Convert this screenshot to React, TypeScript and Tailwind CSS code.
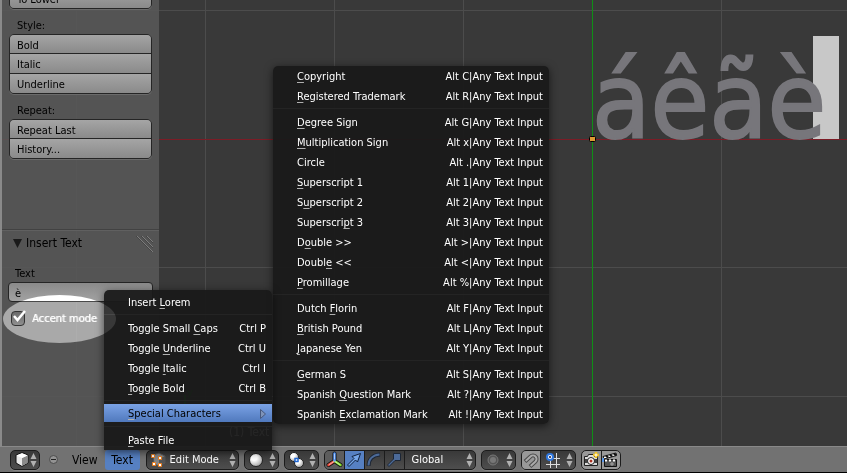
import React from "react";

type Item = { label: string; key?: number; shortcut: string };

const specialGroups: Item[][] = [
  [
    { label: "Copyright", key: 0, shortcut: "Alt C|Any Text Input" },
    { label: "Registered Trademark", key: 0, shortcut: "Alt R|Any Text Input" },
  ],
  [
    { label: "Degree Sign", key: 0, shortcut: "Alt G|Any Text Input" },
    { label: "Multiplication Sign", key: 0, shortcut: "Alt x|Any Text Input" },
    { label: "Circle", shortcut: "Alt .|Any Text Input" },
    { label: "Superscript 1", key: 0, shortcut: "Alt 1|Any Text Input" },
    { label: "Superscript 2", key: 1, shortcut: "Alt 2|Any Text Input" },
    { label: "Superscript 3", key: 9, shortcut: "Alt 3|Any Text Input" },
    { label: "Double >>", key: 1, shortcut: "Alt >|Any Text Input" },
    { label: "Double <<", key: 5, shortcut: "Alt <|Any Text Input" },
    { label: "Promillage", key: 0, shortcut: "Alt %|Any Text Input" },
  ],
  [
    { label: "Dutch Florin", key: 6, shortcut: "Alt F|Any Text Input" },
    { label: "British Pound", key: 0, shortcut: "Alt L|Any Text Input" },
    { label: "Japanese Yen", key: 0, shortcut: "Alt Y|Any Text Input" },
  ],
  [
    { label: "German S", key: 0, shortcut: "Alt S|Any Text Input" },
    { label: "Spanish Question Mark", key: 8, shortcut: "Alt ?|Any Text Input" },
    { label: "Spanish Exclamation Mark", key: 8, shortcut: "Alt !|Any Text Input" },
  ],
];

const textGroups: Item[][] = [
  [{ label: "Insert Lorem", key: 7, shortcut: "" }],
  [
    { label: "Toggle Small Caps", key: 13, shortcut: "Ctrl P" },
    { label: "Toggle Underline", key: 7, shortcut: "Ctrl U" },
    { label: "Toggle Italic", key: 7, shortcut: "Ctrl I" },
    { label: "Toggle Bold", key: 0, shortcut: "Ctrl B" },
  ],
  [{ label: "Special Characters", key: 0, shortcut: ">" }],
  [{ label: "Paste File", key: 0, shortcut: "" }],
];

function Accel({ label, at }: { label: string; at?: number }) {
  if (at === undefined) return <span>{label}</span>;
  return (
    <span>
      {label.slice(0, at)}
      <span className="underline decoration-[#b0b0b0] decoration-1 underline-offset-2 [text-decoration-skip-ink:none]">
        {label[at]}
      </span>
      {label.slice(at + 1)}
    </span>
  );
}

function Menu({ groups, className }: { groups: Item[][]; className: string }) {
  return (
    <div
      role="menu"
      className={`absolute bg-[#191919]/95 text-white shadow-[0_2px_8px_rgba(0,0,0,0.6)] ${className}`}
    >
      {groups.map((group, i) => (
        <div key={i} className={`flex flex-col ${i > 0 ? "mt-[2px] border-t border-[#242424] pt-[3px]" : ""}`}>
          {group.map((item) => {
            const open = item.shortcut === ">";
            return (
              <button
                key={item.label}
                role="menuitem"
                className={`flex w-full items-center justify-between whitespace-nowrap pl-6 pr-[6px] pt-[2px] ${
                  open ? "mb-[2px] h-[18px] bg-linear-to-b from-[#7ba3e6] to-[#5079bd] text-black" : "h-5"
                }`}
              >
                <Accel label={item.label} at={item.key} />
                {open ? (
                  <svg width="6" height="10" viewBox="0 0 6 10">
                    <path d="M.5.5 5.5 5 .5 9.5Z" fill="#7e93b8" stroke="#46587c" />
                  </svg>
                ) : (
                  <span>{item.shortcut}</span>
                )}
              </button>
            );
          })}
        </div>
      ))}
    </div>
  );
}

const gridColumns = [76, 205, 334, 463, 721, 850, 979, 1108, 1237, 1366, 1495, 1624, 1753, 1882];
const gridRows = [10, 267, 396, 525, 653, 782, 911, 1039];

function Viewport() {
  return (
    <svg className="absolute inset-0 h-full w-full" aria-label="3D view">
      {gridColumns.map((x) => (
        <rect key={x} x={x} width="1" height="100%" fill="#4c4c4c" />
      ))}
      {gridRows.map((y) => (
        <rect key={y} y={y} width="100%" height="1" fill="#4c4c4c" />
      ))}
      <rect y="139" width="100%" height="1" fill="#7c1c26" />
      <rect x="592" width="1" height="100%" fill="#0f8f16" />
      <path d="M185 395v12" stroke="#00c000" strokeWidth="2" />
      <text x="187" y="396" fill="#00a000" className="text-[11px]">y</text>
      <text x="229" y="436" fill="#ffffff" className="text-[12px]">(1) Text</text>
      <rect x="813" y="36" width="26" height="103" fill="#c8c8c8" />
      <text x="592" y="138" fill="#77767b" stroke="#77767b" strokeWidth="2" className="text-[106px]">
        áêãè
      </text>
      <rect x="589.500" y="136.500" width="6" height="5" rx="1" fill="#dd9a35" stroke="#000" />
    </svg>
  );
}

function ToolGroup({ items }: { items: string[] }) {
  return (
    <div className="flex flex-col overflow-hidden rounded-[5px] border border-[#252525] shadow-[0_1px_0_#6b6b6b]">
      {items.map((t) => (
        <button
          key={t}
          className="h-5 border-b border-[#252525] bg-linear-to-b from-[#a5a5a5] to-[#8a8a8a] pl-[7px] pt-[3px] text-left first:h-[19px] last:h-[19px] last:border-b-0"
        >
          {t}
        </button>
      ))}
    </div>
  );
}

function ToolShelf() {
  return (
    <aside className="relative flex w-[159px] flex-col border-l-2 border-[#8a8a8a] bg-[#585858]/90">
      <div className="-mt-3 flex flex-col px-[7px]">
        <ToolGroup items={["To Lower"]} />
        <h3 className="mt-[9px] h-4 pl-2 leading-4">Style:</h3>
        <ToolGroup items={["Bold", "Italic", "Underline"]} />
        <h3 className="mt-[9px] h-4 pl-2 leading-4">Repeat:</h3>
        <ToolGroup items={["Repeat Last", "History..."]} />
      </div>
      <section className="mt-[70px] flex flex-col border-t border-[#424242] px-[6px] shadow-[inset_0_1px_0_#606060]">
        <div className="flex h-[26px] items-center pl-[5px]">
          <svg width="9" height="9" viewBox="0 0 9 9">
            <path d="M0 0h9L4.500 9Z" fill="#1a1a1a" />
          </svg>
          <h2 className="pl-1 text-[12px]">Insert Text</h2>
          <svg className="ml-auto" width="17" height="17" viewBox="0 0 17 17" fill="none">
            <path d="M0 1l16 16M5 1l12 12M10 1l7 7" stroke="#444" />
            <path d="M1 1l16 16M6 1l11 11M11 1l6 6" stroke="#7c7c7c" />
          </svg>
        </div>
        <label htmlFor="body" className="mt-[10px] h-4 pl-[7px] leading-4">
          Text
        </label>
        <input
          id="body"
          defaultValue="è"
          className="h-5 rounded-[4px] border border-[#252525] bg-linear-to-b from-[#8a8a8a] to-[#a2a2a2] pl-[6px] pt-[2px] outline-none"
        />
      </section>
    </aside>
  );
}

function Arrows() {
  return (
    <svg className="ml-auto shrink-0" width="7" height="14" viewBox="0 0 7 14" fill="#b0b0b0">
      <path d="M3.500 0 6.500 6h-6ZM.5 8h6l-3 6Z" />
    </svg>
  );
}

const dark =
  "flex h-5 items-center rounded-[5px] border border-[#1c1c1c] bg-linear-to-b from-[#393939] to-[#4e4e4e] shadow-[0_1px_0_#858585]";

function Header() {
  return (
    <footer className="flex h-[27px] shrink-0 items-center border-b border-t border-b-black border-t-[#898989] bg-[#727272] pl-[10px]">
      <button aria-label="Editor type" className={`${dark} w-[30px] pl-1 pr-[2px]`}>
        <svg width="14" height="15" viewBox="0 0 14 15">
          <path d="M7 .5 13 3v8l-6 3.500L1 11V3Z" fill="#e8e8e8" stroke="#111" />
          <path d="M7 6v8l5.500-3V3.500Z" fill="#8a8a8a" />
          <path d="M1.500 3.500 7 1.500l5.500 2L7 6Z" fill="#fff" />
        </svg>
        <Arrows />
      </button>
      <button aria-label="Collapse menus" className="ml-[9px]">
        <svg width="9" height="9" viewBox="0 0 9 9" className="block">
          <circle cx="4.500" cy="4.500" r="4" fill="#939393" stroke="#4b4b4b" />
          <path d="M2 4.500h5" stroke="#222" />
        </svg>
      </button>
      <button className="ml-[14px] pt-px text-[12px]">View</button>
      <button className="ml-[7px] h-5 w-[35px] rounded-[3px] bg-[#5680c2] pt-px text-[12px]">Text</button>
      <button className={`${dark} ml-[6px] w-[93px] pl-1 pr-[2px] text-white`}>
        <svg width="15" height="15" viewBox="0 0 15 15">
          <path d="M2 3 8 1l6 3v7l-6 3-5-2Z" fill="#858585" stroke="#555" />
          <path d="M8 7v7l6-3V4Z" fill="#555" />
          <g fill="#fff" stroke="#e87d1e">
            <path d="M.5 2.500h3v3h-3zM7.500 4.500h3v3h-3zM1.500 10.500h3v3h-3zM7.500 11.500h3v3h-3z" />
          </g>
        </svg>
        <span className="pl-1 pt-[2px]">Edit Mode</span>
        <Arrows />
      </button>
      <button aria-label="Viewport shading" className={`${dark} ml-[5px] w-[35px] pl-1 pr-[2px]`}>
        <svg width="14" height="14" viewBox="0 0 14 14">
          <defs>
            <radialGradient id="ball" cx=".35" cy=".3" r=".8">
              <stop offset=".3" stopColor="#fff" />
              <stop offset="1" stopColor="#999" />
            </radialGradient>
          </defs>
          <circle cx="7" cy="7" r="6.500" fill="url(#ball)" stroke="#222" />
        </svg>
        <Arrows />
      </button>
      <button aria-label="Pivot point" className={`${dark} ml-[5px] w-[35px] pl-1 pr-[2px]`}>
        <svg width="15" height="16" viewBox="0 0 15 16">
          <circle cx="5" cy="5" r="4.500" fill="url(#ball)" stroke="#222" />
          <circle cx="10" cy="11" r="4.500" fill="url(#ball)" stroke="#222" />
          <path d="M6 6.500h3v3H6z" fill="#fff" stroke="#1f66d0" strokeWidth="1.500" />
        </svg>
        <Arrows />
      </button>
      <div className={`${dark} ml-[5px] w-[152px] overflow-hidden text-white`}>
        <button aria-label="Manipulator" className="flex h-full w-[19px] items-center justify-center bg-[#5d5d5d]">
          <svg width="17" height="17" viewBox="0 0 17 17" fill="none" strokeLinecap="round">
            <path d="M8.500 10V2.500M8.500 10 2.500 14M8.500 10 14.500 14" stroke="#111" strokeWidth="4" />
            <path d="M8.500 10 2.500 14" stroke="#f05040" strokeWidth="2.500" />
            <path d="M8.500 10 14.500 14" stroke="#86dc30" strokeWidth="2.500" />
            <path d="M8.500 9.500V2.500" stroke="#4a8df0" strokeWidth="2.500" />
            <path d="M8.500 8V3M8 10.500 3.500 13.500M9 10.500l4.500 3" stroke="#fff" strokeOpacity=".7" strokeWidth=".8" />
          </svg>
        </button>
        <button aria-label="Translate" className="flex h-full w-5 items-center justify-center border-l border-[#1c1c1c] bg-[#5680c2]">
          <svg width="16" height="16" viewBox="0 0 16 16">
            <path d="M1.500 13 8 6.500 6 4.500l8.500-3-3 8.500-2-2L3 14.500Z" fill="#75a5e8" stroke="#10203c" />
          </svg>
        </button>
        <button aria-label="Rotate" className="flex h-full w-5 items-center justify-center border-l border-[#1c1c1c]">
          <svg width="16" height="16" viewBox="0 0 16 16" fill="none">
            <path d="M2.500 14C2.500 7 7 3 14 2.500" stroke="#1c2635" strokeWidth="4" />
            <path d="M2.500 13.500C2.500 7 7 3 13.500 2.500" stroke="#4c6a98" strokeWidth="2" />
          </svg>
        </button>
        <button aria-label="Scale" className="flex h-full w-5 items-center justify-center border-l border-[#1c1c1c]">
          <svg width="16" height="16" viewBox="0 0 16 16">
            <path d="M1.500 13 7.500 7V1.500h7v7H9L3 14.500Z" fill="#4c6a98" stroke="#1c2635" />
          </svg>
        </button>
        <button className="flex h-full grow items-center border-l border-[#1c1c1c] pl-[7px] pr-[2px]">
          <span className="pt-[2px]">Global</span>
          <Arrows />
        </button>
      </div>
      <button aria-label="Proportional editing" className={`${dark} ml-[5px] w-[35px] pl-1 pr-[2px]`}>
        <svg width="14" height="14" viewBox="0 0 14 14">
          <circle cx="7" cy="7" r="5" fill="#555" stroke="#777" />
          <circle cx="7" cy="7" r="3" fill="#777" />
        </svg>
        <Arrows />
      </button>
      <div className={`${dark} ml-[5px] w-[55px] overflow-hidden`}>
        <button aria-label="Snap" className="flex h-full w-[18px] items-center justify-center bg-[#999]">
          <svg width="16" height="16" viewBox="0 0 16 16" fill="none">
            <path d="M2 9.500 7.500 4.500a3.400 3.400 0 0 1 5 5L7 14.500" stroke="#4a4a4a" strokeWidth="4" />
            <path d="M2.700 8.900 7.500 4.500a3.400 3.400 0 0 1 5 5L7.700 13.900" stroke="#aaa" strokeWidth="2" />
          </svg>
        </button>
        <button aria-label="Snap element" className="flex h-full grow items-center border-l border-[#1c1c1c] pl-1 pr-[2px]">
          <svg width="16" height="16" viewBox="0 0 16 16" fill="none">
            <path d="M5.500 4v12M11.500 1v15M2 6.500h13M1 12.500h14" stroke="#ddd" />
            <circle cx="5" cy="5" r="3" fill="#fff" stroke="#2f78e0" strokeWidth="2" />
            <circle cx="5" cy="5" r="1" fill="#113" />
          </svg>
          <Arrows />
        </button>
      </div>
      <div className="ml-[5px] flex h-5 w-10 overflow-hidden rounded-[5px] border border-[#1c1c1c] bg-[#999] shadow-[0_1px_0_#858585]">
        <button aria-label="Render image" className="flex w-[19px] items-center justify-center">
          <svg width="17" height="16" viewBox="0 0 17 16">
            <path d="M1.500 4.500h3l1-2h5l1 2h3v9h-13z" fill="#ddd" stroke="#222" />
            <path d="M2 7h12v4H2z" fill="#444" />
            <circle cx="8" cy="9" r="3.500" fill="#fff" stroke="#222" />
            <circle cx="8" cy="9" r="1.500" fill="#a32" />
            <path d="M13 0v6M10 3h6" stroke="#f2c21c" strokeWidth="2.500" />
            <path d="M13 1.500v3M11.500 3h3" stroke="#fff" />
          </svg>
        </button>
        <button aria-label="Render animation" className="flex w-[19px] items-center justify-center border-l border-[#1c1c1c]">
          <svg width="17" height="16" viewBox="0 0 17 16">
            <path d="M2.500 7.500h12v7h-12z" fill="#555" stroke="#111" />
            <path d="M1 4.500 14 1l.6 2.500L2 7Z" fill="#fff" stroke="#111" />
            <path d="m4 3.500 2 2M8 2.500l2 2M12 1.500l2 2" stroke="#111" strokeWidth="2" />
            <path d="M3 8.500h11" stroke="#fff" strokeWidth="2" strokeDasharray="2 2" />
            <path d="M10 10v4M8 12h4" stroke="#aaa" />
            <path d="M1 6v4" stroke="#5a96e8" strokeWidth="2" />
          </svg>
        </button>
      </div>
    </footer>
  );
}

export default function App() {
  return (
    <div className="relative flex h-screen flex-col overflow-hidden bg-[#393939] font-['DejaVu_Sans_Condensed','DejaVu_Sans',sans-serif] text-[11px] text-black">
      <main className="relative flex min-h-0 grow">
        <Viewport />
        <ToolShelf />
      </main>
      <Header />
      <Menu groups={specialGroups} className="left-[273px] top-[66px] w-[276px] rounded-[5px]" />
      <Menu groups={textGroups} className="bottom-[23px] left-[104px] w-[168px] rounded-t-[5px] pt-[2px]" />
      <div className="absolute left-[3px] top-[295px] h-12 w-[113px] rounded-[50%] bg-[#808080] mix-blend-color-dodge" />
      <label className="absolute left-[11px] top-[309px] flex items-center gap-[7px] text-white [text-shadow:1px_0_0_rgba(255,255,255,0.6)]">
        <span className="relative flex">
          <input
            type="checkbox"
            defaultChecked
            className="h-[15px] w-[14px] appearance-none rounded-[4px] border border-[#333] bg-linear-to-b from-[#6a6a6a] to-[#909090]"
          />
          <svg className="pointer-events-none absolute bottom-1 left-[2px]" width="13" height="12" viewBox="0 0 13 12" fill="none">
            <path d="M1 6l3.500 4L12 1" stroke="#fff" strokeWidth="2.500" />
          </svg>
        </span>
        <span className="pt-[2px]">Accent mode</span>
      </label>
    </div>
  );
}
